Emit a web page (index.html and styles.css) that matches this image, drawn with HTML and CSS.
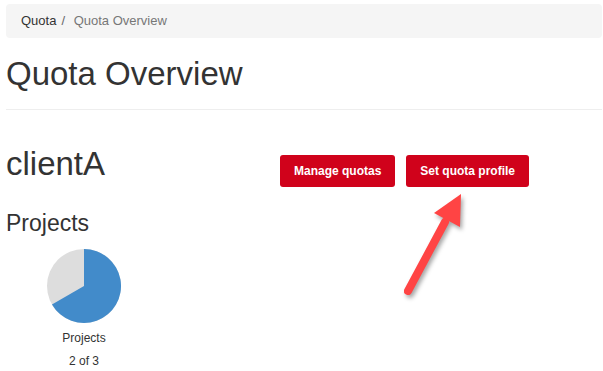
FILE: index.html
```html
<!DOCTYPE html>
<html lang="en">
<head>
    <meta charset="UTF-8">
    <meta name="viewport" content="width=device-width, initial-scale=1.0">
    <title>Quota Overview</title>
    <link rel="stylesheet" href="styles.css">
</head>
<body>
    <div class="page">
        <ol class="breadcrumb">
            <li><a href="#">Quota</a></li>
            <li class="active">Quota Overview</li>
        </ol>

        <div class="page-header">
            <h1>Quota Overview</h1>
        </div>

        <div class="client-row">
            <h2 class="client-name">clientA</h2>
            <div class="actions">
                <button class="btn-red">Manage quotas</button>
                <button class="btn-red">Set quota profile</button>
            </div>
        </div>

        <h3 class="section-title">Projects</h3>
        <div class="chart">
            <!-- 2 of 3 used -->
            <svg class="pie" width="74" height="74" viewBox="0 0 74 74">
                <circle cx="37" cy="37" r="37" fill="#dddddd"/>
                <path d="M37 37 L37 0 A37 37 0 1 1 4.96 55.5 Z" fill="#428bca"/>
            </svg>
            <div class="chart-label">Projects</div>
            <div class="chart-value">2 of 3</div>
        </div>

        <!-- annotation arrow pointing at the profile button -->
        <svg class="arrow" width="80" height="115" viewBox="0 0 80 115">
            <line x1="13" y1="106" x2="50" y2="37" stroke="#ff4444" stroke-width="8" stroke-linecap="round"/>
            <polygon points="66,9 39,28 65,42" fill="#ff4444"/>
        </svg>
    </div>
</body>
</html>
```

FILE: styles.css
```css
body {
    margin: 0;
    font-family: "Liberation Sans", Arial, sans-serif;
    color: #333;
    background: #fff;
}

.page {
    position: relative;
    padding: 4px 1px 0 6px;
    height: 367px;
    overflow: hidden;
}

/* Breadcrumb */
.breadcrumb {
    list-style: none;
    margin: 0;
    padding: 8px 15px;
    background-color: #f5f5f5;
    border-radius: 4px;
    font-size: 13px;
    line-height: 18px;
    display: flex;
}

.breadcrumb a {
    color: #333;
    text-decoration: none;
}

.breadcrumb li + li:before {
    content: "/\00a0";
    padding: 0 5px;
    color: #666;
}

.breadcrumb .active {
    color: #777;
}

/* Headings */
.page-header {
    padding-bottom: 17px;
    border-bottom: 1px solid #eee;
}

h1, h2, h3 {
    font-weight: normal;
    line-height: 1.1;
    margin: 0;
}

.page-header h1 {
    font-size: 33px;
    margin-top: 18px;
}

.client-row {
    display: grid;
    grid-template-columns: 274px 1fr;
    margin-top: 36px;
}

.client-name {
    font-size: 33px;
}

.actions {
    display: flex;
    gap: 11px;
    margin-top: 9px;
    align-items: flex-start;
}

.btn-red {
    background-color: #d0021b;
    color: #fff;
    border: none;
    border-radius: 3px;
    font-family: inherit;
    font-size: 12px;
    font-weight: bold;
    line-height: 16px;
    padding: 8px 14px;
    cursor: pointer;
}

.section-title {
    font-size: 23px;
    margin-top: 24px;
}

/* Pie chart */
.chart {
    width: 156px;
    display: flex;
    flex-direction: column;
    align-items: center;
    margin-top: 12px;
    font-size: 12px;
}

.chart-label {
    margin-top: 7px;
    line-height: 17px;
}

.chart-value {
    margin-top: 6px;
    line-height: 17px;
}

/* Annotation */
.arrow {
    position: absolute;
    left: 395px;
    top: 185px;
    overflow: visible;
    filter: drop-shadow(2px 3px 2px rgba(0, 0, 0, 0.35));
}
```
